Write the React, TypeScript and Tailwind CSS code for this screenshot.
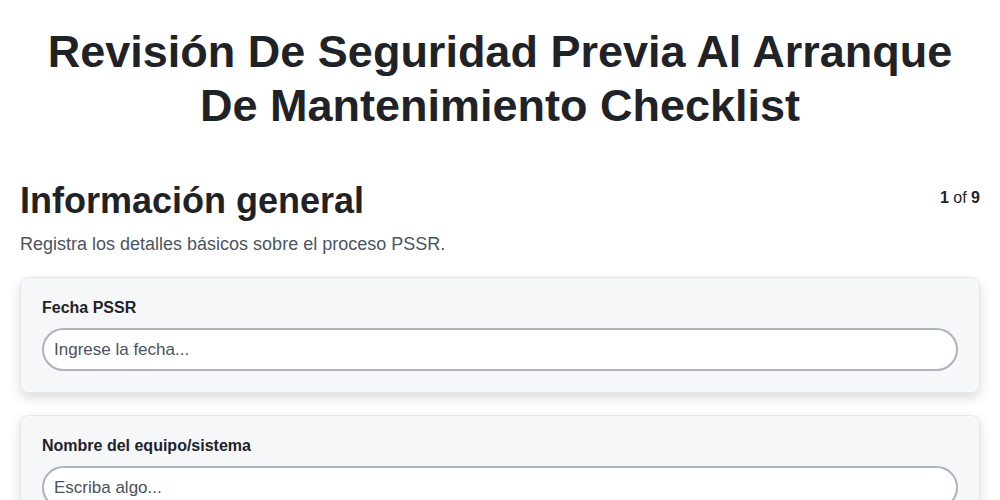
import { useState } from 'react'

const fields = [
  { id: 'fecha', label: 'Fecha PSSR', placeholder: 'Ingrese la fecha...' },
  { id: 'equipo', label: 'Nombre del equipo/sistema', placeholder: 'Escriba algo...' },
  { id: 'area', label: 'Área / Unidad', placeholder: 'Escriba algo...' },
]

function FieldCard({ label, placeholder }: { label: string; placeholder: string }) {
  const [value, setValue] = useState('')
  return (
    <div className="rounded-lg border border-[#e6e8ec] bg-[#f6f7f9] px-[21px] pt-[18px] pb-[21px] shadow-[0_5px_12px_rgba(0,0,0,0.14)]">
      <label className="mb-[8px] block text-[16px] font-bold text-[#1f2328]">{label}</label>
      <input
        value={value}
        onChange={e => setValue(e.target.value)}
        placeholder={placeholder}
        className="h-[43px] w-full rounded-full border-2 border-[#aeb4bc] bg-white px-[10px] text-[17px] text-[#1f2328] placeholder:text-[#4b5260] outline-none"
      />
    </div>
  )
}

export default function App() {
  return (
    <main className="min-h-screen bg-white font-['Liberation_Sans',Arial,sans-serif] text-[#1f2328]">
      <h1 className="mx-auto max-w-[920px] pt-[25px] text-center text-[45px] font-bold leading-[54px]">
        Revisión De Seguridad Previa Al Arranque De Mantenimiento Checklist
      </h1>

      <section className="px-5 pt-[45px]">
        <div className="flex items-start justify-between">
          <h2 className="text-[36px] font-bold leading-[46px]">Información general</h2>
          <span className="pt-[8px] text-[16px]">
            <b>1</b> of <b>9</b>
          </span>
        </div>
        <p className="mt-[7px] text-[18px] text-[#4b5563]">
          Registra los detalles básicos sobre el proceso PSSR.
        </p>

        <div className="mt-[19px] flex flex-col gap-[22px]">
          {fields.map(f => (
            <FieldCard key={f.id} label={f.label} placeholder={f.placeholder} />
          ))}
        </div>
      </section>
    </main>
  )
}
